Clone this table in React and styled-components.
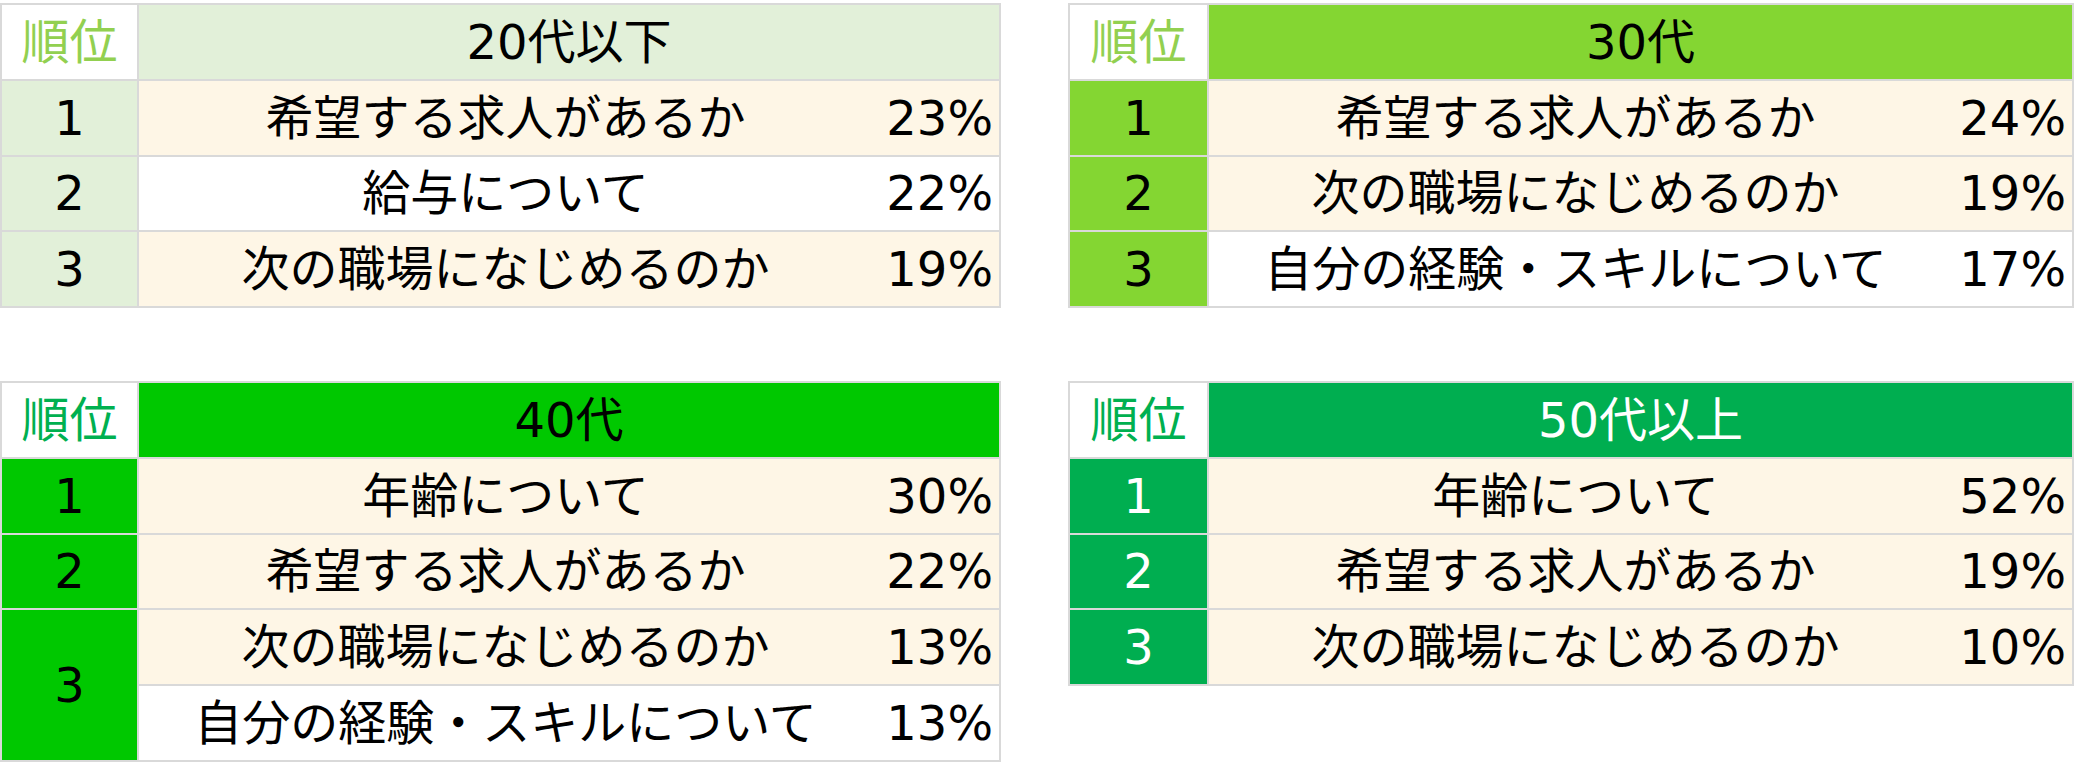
import React from 'react'
import styled, { createGlobalStyle } from 'styled-components'

const GlobalStyle = createGlobalStyle`
  body {
    margin: 0;
    background: #ffffff;
    font-family: "DejaVu Sans", "Noto Sans CJK JP", sans-serif;
  }
`

const themes = {
  light: { head: '#e2f0d9', headText: '#000000', rank: '#e2f0d9', rankText: '#000000', label: '#92d050' },
  lime: { head: '#84d632', headText: '#000000', rank: '#84d632', rankText: '#000000', label: '#92d050' },
  green: { head: '#00c800', headText: '#000000', rank: '#00c800', rankText: '#000000', label: '#00b050' },
  dark: { head: '#00ae50', headText: '#ffffff', rank: '#00ae50', rankText: '#ffffff', label: '#00b050' },
}

const tables = [
  {
    title: '20代以下', theme: 'light', rankW: 135,
    rows: [
      { rank: 1, items: [['希望する求人があるか', '23%', true]] },
      { rank: 2, items: [['給与について', '22%', false]] },
      { rank: 3, items: [['次の職場になじめるのか', '19%', true]] },
    ],
  },
  {
    title: '30代', theme: 'lime', rankW: 137,
    rows: [
      { rank: 1, items: [['希望する求人があるか', '24%', true]] },
      { rank: 2, items: [['次の職場になじめるのか', '19%', true]] },
      { rank: 3, items: [['自分の経験・スキルについて', '17%', false]] },
    ],
  },
  {
    title: '40代', theme: 'green', rankW: 135,
    rows: [
      { rank: 1, items: [['年齢について', '30%', true]] },
      { rank: 2, items: [['希望する求人があるか', '22%', true]] },
      { rank: 3, items: [['次の職場になじめるのか', '13%', true], ['自分の経験・スキルについて', '13%', false]] },
    ],
  },
  {
    title: '50代以上', theme: 'dark', rankW: 137,
    rows: [
      { rank: 1, items: [['年齢について', '52%', true]] },
      { rank: 2, items: [['希望する求人があるか', '19%', true]] },
      { rank: 3, items: [['次の職場になじめるのか', '10%', true]] },
    ],
  },
]

export default function App() {
  return (
    <>
      <GlobalStyle />
      <Page>
        {tables.map((t) => {
          const th = themes[t.theme]
          return (
            <Table key={t.title} $rankW={t.rankW}>
              <RankHead $color={th.label}>順位</RankHead>
              <TitleCell $bg={th.head} $color={th.headText}>{t.title}</TitleCell>
              {t.rows.map((r) => (
                <React.Fragment key={r.rank}>
                  <RankCell $bg={th.rank} $color={th.rankText} $span={r.items.length}>{r.rank}</RankCell>
                  {r.items.map(([text, pct, cream]) => (
                    <ItemCell key={text} $cream={cream}>
                      <ItemText>{text}</ItemText>
                      <Pct>{pct}</Pct>
                    </ItemCell>
                  ))}
                </React.Fragment>
              ))}
            </Table>
          )
        })}
      </Page>
    </>
  )
}

const Page = styled.div`
  display: grid;
  grid-template-columns: 1001px 1006px;
  column-gap: 67px;
  row-gap: 73px;
  align-items: start;
  padding-top: 3px;
`

const Table = styled.div`
  display: grid;
  grid-template-columns: ${(p) => p.$rankW}px 1fr;
  grid-auto-rows: 73.75px;
  gap: 2px;
  padding: 2px;
  background: #d9d9d9;
  font-size: 48px;
  line-height: 1;
`

const Cell = styled.div`
  display: flex;
  align-items: center;
  justify-content: center;
`

const RankHead = styled(Cell)`
  background: #ffffff;
  color: ${(p) => p.$color};
`

const TitleCell = styled(Cell)`
  background: ${(p) => p.$bg};
  color: ${(p) => p.$color};
`

const RankCell = styled(Cell)`
  grid-row: span ${(p) => p.$span};
  background: ${(p) => p.$bg};
  color: ${(p) => p.$color};
`

const ItemCell = styled.div`
  display: grid;
  grid-template-columns: 733px 1fr;
  align-items: center;
  background: ${(p) => (p.$cream ? '#fef6e6' : '#ffffff')};
  color: #000000;
`

const ItemText = styled.div`
  text-align: center;
  white-space: nowrap;
`

const Pct = styled.div`
  text-align: right;
  padding-right: 6px;
  white-space: nowrap;
`
